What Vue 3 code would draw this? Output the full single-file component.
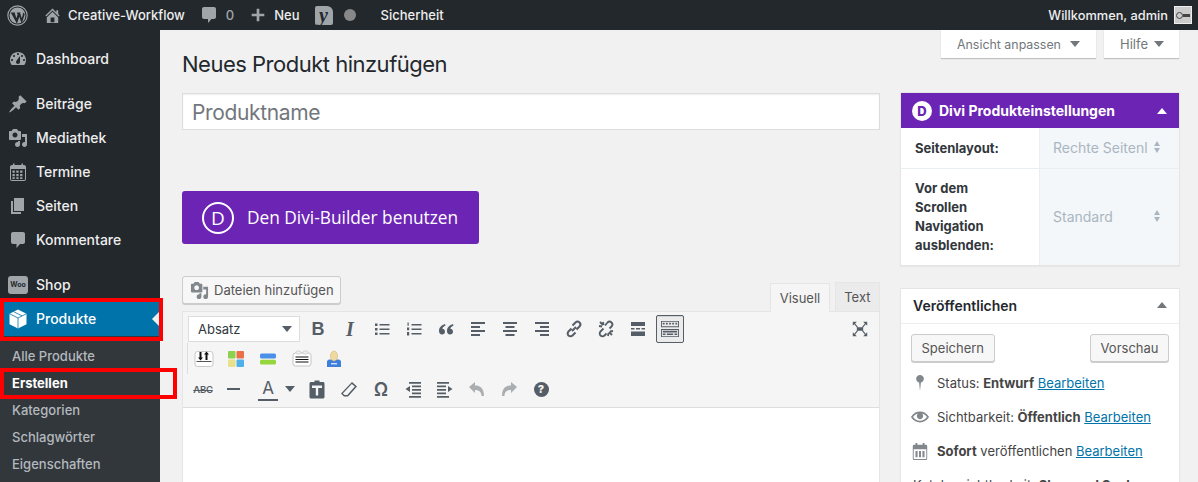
<script setup>
const P = {
  home: 'M16 8.500l1.530 1.530-1.060 1.060L10 4.620l-6.470 6.470-1.060-1.060L10 2.500l4 4v-2h2v4zm-6-2.460l6 5.990V18H4v-5.970zM12 17v-5H8v5h4z',
  comment: 'M5 2h10c1.100 0 2 .9 2 2v8c0 1.100-.9 2-2 2h-2.500L9 18v-4H5c-1.100 0-2-.9-2-2V4c0-1.100.9-2 2-2z',
  plus: 'M17 8.500v3h-5.500V17h-3v-5.500H3v-3h5.500V3h3v5.500z',
  dashboard: 'M3.760 16h12.480c1.100-1.370 1.760-3.110 1.760-5 0-4.420-3.580-8-8-8s-8 3.580-8 8c0 1.890.66 3.630 1.760 5zM10 4c.55 0 1 .45 1 1s-.45 1-1 1-1-.45-1-1 .45-1 1-1zM6 6c.55 0 1 .45 1 1s-.45 1-1 1-1-.45-1-1 .45-1 1-1zm8 0c.55 0 1 .45 1 1s-.45 1-1 1-1-.45-1-1 .45-1 1-1zm-5.370 5.550L12 7v6c0 1.100-.9 2-2 2s-2-.9-2-2c0-.57.24-1.080.63-1.450zM4 10c.55 0 1 .45 1 1s-.45 1-1 1-1-.45-1-1 .45-1 1-1zm12 0c.55 0 1 .45 1 1s-.45 1-1 1-1-.45-1-1 .45-1 1-1z',
  pin: 'M10.440 3.020l1.820-1.820 6.360 6.350-1.830 1.820c-1.050-.68-2.480-.57-3.410.36l-.75.75c-.92.93-1.040 2.350-.35 3.410l-1.830 1.820-2.410-2.410-2.800 2.790c-.42.42-3.380 2.710-3.800 2.290s1.860-3.390 2.280-3.810l2.790-2.790L4.100 9.360l1.830-1.820c1.050.69 2.480.57 3.400-.36l.75-.75c.93-.92 1.050-2.350.36-3.410z',
  media: 'M13 11V4c0-.55-.45-1-1-1h-1.670L9 1H5L3.670 3H2c-.55 0-1 .45-1 1v7c0 .55.45 1 1 1h10c.55 0 1-.45 1-1zM7 4.500c1.380 0 2.500 1.120 2.500 2.500S8.380 9.500 7 9.500 4.500 8.380 4.500 7 5.620 4.500 7 4.500zM14 6h5v10.500c0 1.380-1.120 2.500-2.500 2.500S14 17.880 14 16.500s1.120-2.500 2.500-2.500c.17 0 .34.02.5.05V9h-3V6zm-4 8.050V13h2v3.500c0 1.380-1.120 2.500-2.500 2.500S7 17.880 7 16.500 8.120 14 9.500 14c.17 0 .34.02.5.05z',
  calendar: 'M4 3h1V1.500h1.500V3h7V1.500H15V3h1c1.100 0 2 .9 2 2v12c0 1.100-.9 2-2 2H4c-1.100 0-2-.9-2-2V5c0-1.100.9-2 2-2zm-1 4v10c0 .55.45 1 1 1h12c.55 0 1-.45 1-1V7H3zm1.500 1.500h2.300v2.200H4.500zm3.800 0h2.300v2.200H8.300zm3.800 0h2.300v2.200h-2.300zM4.500 12h2.300v2.200H4.500zm3.800 0h2.300v2.200H8.300zm3.800 0h2.300v2.200h-2.300zM4.500 15.300h2.300v1.700H4.500zm3.800 0h2.300v1.700H8.300zm3.800 0h2.300v1.700h-2.300z',
  calendarCols: 'M3.500 3H5V1h2v2h6V1h2v2h1.500C17.300 3 18 3.700 18 4.500v14c0 .8-.7 1.500-1.500 1.500h-13C2.700 20 2 19.300 2 18.500v-14C2 3.700 2.700 3 3.500 3zM3 8v11h14V8zm2 2h2.300v7H5zm3.900 0h2.200v7H8.900zm3.800 0H15v7h-2.300z',
  page: 'M6 15V2h10v13H6zm-1 1h8v2H3V5h2v11z',
  bubble: 'M5 2h10c1.100 0 2 .9 2 2v8c0 1.100-.9 2-2 2h-3l-3.500 4v-4H5c-1.100 0-2-.9-2-2V4c0-1.100.9-2 2-2z',
  cube: 'M10 .5l8.500 4.200v10.600L10 19.500l-8.500-4.200V4.700z',
  eye: 'M19.700 9.400C17.700 6 14 3.900 10 3.900S2.300 6 .3 9.400L0 10l.3.600c2 3.400 5.700 5.500 9.700 5.500s7.700-2.100 9.700-5.500l.3-.6-.3-.6zM10 14.100c-3.100 0-6-1.600-7.700-4.100C3.600 8 5.700 6.600 8 6.100c-.9.6-1.500 1.700-1.500 2.900 0 1.900 1.600 3.500 3.500 3.500s3.500-1.600 3.500-3.500c0-1.200-.6-2.300-1.500-2.900 2.300.5 4.400 1.900 5.700 3.900-1.700 2.500-4.600 4.100-7.700 4.100z',
  statusPin: 'M10 1c2.400 0 4.300 1.900 4.300 4.300 0 2-1.400 3.700-3.300 4.200L10 19l-1-9.500C7.100 9 5.700 7.300 5.700 5.300 5.700 2.900 7.600 1 10 1z',
}
const menu = [
  { label: 'Dashboard', icon: P.dashboard, gap: true },
  { label: 'Beiträge', icon: P.pin },
  { label: 'Mediathek', icon: P.media },
  { label: 'Termine', icon: P.calendar },
  { label: 'Seiten', icon: P.page },
  { label: 'Kommentare', icon: P.bubble, gap: true },
  { label: 'Shop', woo: true },
]
const submenu = ['Alle Produkte', 'Erstellen', 'Kategorien', 'Schlagwörter', 'Eigenschaften']
</script>

<template>
  <div class="page">
    <header class="adminbar">
      <div class="bar-left">
        <svg class="wp" viewBox="0 0 20 20"><circle cx="10" cy="10" r="9.200" fill="none" stroke="#a0a5aa" stroke-width="1.100"/><circle cx="10" cy="10" r="7.600" fill="#a0a5aa"/><path d="M3.600 7.200h4.400l-.6.5 1.500 5 1.200-3.400-.7-2.100h3.700l-.6.5 1.500 5 1.100-3.300c.3-.9-.2-1.700.2-2.200l1.600 1.700-2.900 8.600-2.300-6.200-2.200 6.500z" fill="#23282d"/></svg>
        <svg class="ab-home" viewBox="0 0 20 20"><path :d="P.home"/></svg>
        <span class="ab-site">Creative-Workflow</span>
        <svg class="ab-comment" viewBox="0 0 20 20"><path :d="P.comment"/></svg>
        <span class="ab-count">0</span>
        <svg class="ab-plus" viewBox="0 0 20 20"><path :d="P.plus"/></svg>
        <span class="ab-new">Neu</span>
        <span class="ab-yoast"><span>y</span></span>
        <span class="ab-dot"></span>
        <span class="ab-sec">Sicherheit</span>
      </div>
      <div class="bar-right">
        <span>Willkommen, admin</span>
        <span class="avatar"><span class="avatar-ring"></span><span class="avatar-bar"></span></span>
      </div>
    </header>

    <div class="body">
      <nav class="sidebar">
        <ul class="menu">
          <li v-for="m in menu" :key="m.label" class="menu-item" :class="{ gap: m.gap }">
            <span v-if="m.woo" class="woo">Woo</span>
            <svg v-else class="menu-icon" viewBox="0 0 20 20"><path :d="m.icon"/></svg>
            <span>{{ m.label }}</span>
          </li>
          <li class="menu-item current">
            <svg class="menu-icon cube-icon" viewBox="0 0 20 20"><path :d="P.cube"/><path d="M1.500 4.700L10 9l8.500-4.300M10 9v10.500M5.500 2.600l8.500 4.300" stroke="#0073aa" stroke-width=".8" fill="none"/></svg>
            <span>Produkte</span>
            <i class="current-arrow"></i>
          </li>
        </ul>
        <ul class="submenu">
          <li v-for="s in submenu" :key="s" :class="{ active: s === 'Erstellen' }">{{ s }}</li>
        </ul>
        <div class="mark mark-main"></div>
        <div class="mark mark-sub"></div>
      </nav>

      <main class="content">
        <div class="screen-tabs">
          <span class="screen-tab">Ansicht anpassen<i class="tri"></i></span>
          <span class="screen-tab help">Hilfe<i class="tri"></i></span>
        </div>
        <div class="columns">
          <section class="main-col">
            <h1>Neues Produkt hinzufügen</h1>
            <div class="title-input">Produktname</div>
            <div class="divi-btn"><span class="divi-d">D</span><span>Den Divi-Builder benutzen</span></div>
            <div class="media-row">
              <span class="btn media-btn"><svg class="media-icon" viewBox="0 0 20 20"><path :d="P.media"/></svg>Dateien hinzufügen</span>
              <div class="tabs"><span class="tab on">Visuell</span><span class="tab">Text</span></div>
            </div>
            <div class="editor">
              <div class="toolbar">
                <div class="row row1">
                  <span class="fmt">Absatz<i class="tri dark"></i></span>
                  <span class="tb glyph b">B</span>
                  <span class="tb glyph i">I</span>
                  <span class="tb"><svg viewBox="0 0 20 20"><path d="M3 4.500h2.500V7H3zM3 9h2.500v2.500H3zM3 13.500h2.500V16H3zM7.500 5h10v1.400h-10zM7.500 9.500h10v1.400h-10zM7.500 14h10v1.400h-10z"/></svg></span>
                  <span class="tb"><svg viewBox="0 0 20 20"><path d="M3.500 3.500h1.200v3.300H3.500zM3 8.500h2.200v2.800H3zM3 13h2.200v3.500H3zM7.500 5h10v1.400h-10zM7.500 9.500h10v1.400h-10zM7.500 14h10v1.400h-10z"/></svg></span>
                  <span class="tb"><svg viewBox="0 0 20 20"><path d="M9 5C6 6 3 8 3 12c0 2 1.200 3.500 3 3.500s3-1.300 3-3-1.200-2.800-2.700-2.800c.3-1.200 1.500-2.500 3.200-3.200zM17 5c-3 1-6 3-6 7 0 2 1.200 3.500 3 3.500s3-1.300 3-3-1.200-2.800-2.700-2.800c.3-1.200 1.500-2.500 3.200-3.200z"/></svg></span>
                  <span class="tb"><svg viewBox="0 0 20 20"><path d="M3 3h14v2H3zM3 7h9v2H3zM3 11h14v2H3zM3 15h9v2H3z"/></svg></span>
                  <span class="tb"><svg viewBox="0 0 20 20"><path d="M3 3h14v2H3zM5.500 7h9v2h-9zM3 11h14v2H3zM5.500 15h9v2h-9z"/></svg></span>
                  <span class="tb"><svg viewBox="0 0 20 20"><path d="M3 3h14v2H3zM8 7h9v2H8zM3 11h14v2H3zM8 15h9v2H8z"/></svg></span>
                  <span class="tb"><svg viewBox="0 0 20 20"><path d="M8 12l4-4M7.500 9.500l-3 3a2.800 2.800 0 0 0 4 4l3-3M8.500 6.500l3-3a2.800 2.800 0 0 1 4 4l-3 3" fill="none" stroke="#555d66" stroke-width="2"/></svg></span>
                  <span class="tb"><svg viewBox="0 0 20 20"><path d="M7.500 9.500l-3 3a2.800 2.800 0 0 0 4 4l2-2M9 6.500l2.500-3a2.800 2.800 0 0 1 4 4l-2 2M4 3l3 3M3 7l3 .5M7 3l.5 3M16 16l-3-3M17 12l-3 .5M12 17l.5-3" fill="none" stroke="#555d66" stroke-width="1.800"/></svg></span>
                  <span class="tb"><svg viewBox="0 0 20 20"><path d="M3 3h14v4H3zM3 9h3.500v1.500H3zM8 9h4v1.500H8zM13.500 9H17v1.500h-3.500zM3 12.500h14V17H3z"/></svg></span>
                  <span class="tb kitchen"><svg viewBox="0 0 24 20"><path d="M2 1h20v7H2zm1 1v5h18V2zM4 3h2v2H4zm3.500 0h2v2h-2zm3.500 0h2v2h-2zm3.500 0h2v2h-2zm3.500 0h2v2h-2zM2 10h20v9H2zm1 1v7h18v-7zM4 12h16v1.800H4zM4 15h3v1.800H4zm4.500 0h7v1.800h-7zm8.500 0h3v1.800h-3z" fill-rule="evenodd"/></svg></span>
                  <span class="tb full"><svg viewBox="0 0 20 20"><path d="M2 2h4.500L2 6.500zM18 2v4.500L13.500 2zM2 18v-4.500L6.500 18zM18 18h-4.500l4.500-4.500zM6.500 8h7v4h-7z"/><path d="M3.500 3.500L7.500 8.500M16.500 3.500L12.500 8.500M3.500 16.500L7.500 11.500M16.500 16.500L12.500 11.500" stroke="#555d66" stroke-width="1.200"/></svg></span>
                </div>
                <div class="row row2">
                  <span class="tb color"><svg viewBox="0 0 20 20"><rect x="1" y="2.500" width="18" height="15" rx="2.500" fill="#fff" stroke="#c8c8c8"/><rect x="2.500" y="12" width="15" height="1" fill="#555"/><path d="M5.500 3v5.500H4l2.500 3 2.500-3H7.500V3zM13.500 11V5.500H15L12.500 2.500 10 5.500h1.500V11z" fill="#111"/></svg></span>
                  <span class="tb color"><svg viewBox="0 0 20 20"><rect x="2" y="2" width="7.500" height="7.500" rx="1" fill="#8ed14f"/><rect x="10.500" y="2" width="7.500" height="7.500" rx="1" fill="#ec7047"/><rect x="2" y="10.500" width="7.500" height="7.500" rx="1" fill="#e8e08a"/><rect x="10.500" y="10.500" width="7.500" height="7.500" rx="1" fill="#4fb0ea"/></svg></span>
                  <span class="tb color"><svg viewBox="0 0 20 20"><rect x="2" y="4.500" width="16" height="5" rx="1.500" fill="#4a8fe8"/><rect x="2" y="10.800" width="16" height="4.700" rx="1.500" fill="#94d63c"/></svg></span>
                  <span class="tb color shift"><svg viewBox="0 0 20 20"><rect x="1" y="4" width="18" height="13" rx="2.500" fill="#fff" stroke="#c4c4c4"/><rect x="4" y="2" width="5" height="3" rx="1.500" fill="#eee" stroke="#c4c4c4" stroke-width=".7"/><rect x="11" y="2" width="5" height="3" rx="1.500" fill="#eee" stroke="#c4c4c4" stroke-width=".7"/><path d="M3.500 7.500h13v1h-13zM3.500 10h13v1h-13zM3.500 12.500h13v1h-13z" fill="#111"/></svg></span>
                  <span class="tb color"><svg viewBox="0 0 20 20"><path d="M3 18v-5c0-1.500 1-2.500 2.500-2.500h9c1.500 0 2.500 1 2.500 2.500v5z" fill="#3f7fdc"/><rect x="7" y="14" width="6" height="1.400" fill="#cfe0f8"/><ellipse cx="10" cy="7" rx="3.600" ry="5" fill="#efd9a0" stroke="#c9b070" stroke-width=".5"/></svg></span>
                </div>
                <div class="row row3">
                  <span class="tb abc">ABC</span>
                  <span class="tb"><svg viewBox="0 0 20 20"><path d="M3 9h13v2H3z"/></svg></span>
                  <span class="tb color-a"><span>A</span></span>
                  <i class="tri dark a-caret"></i>
                  <span class="tb"><svg viewBox="0 0 20 20"><path d="M7.500 1.500h5V3h3.500c.8 0 1.500.7 1.500 1.500V18c0 .8-.7 1.500-1.500 1.500H4c-.8 0-1.500-.7-1.500-1.500V4.500C2.500 3.700 3.200 3 4 3h3.500zM5 6.500v2.500h3.800v7.500h2.400V9H15V6.500z" fill-rule="evenodd"/></svg></span>
                  <span class="tb"><svg viewBox="0 0 20 20"><path d="M13 3l5 4.500-9 10H5l-3-3zm-.2 2L3.800 14.400 5.700 16h2.600l7.600-8.400z" fill-rule="evenodd"/></svg></span>
                  <span class="tb glyph omega">Ω</span>
                  <span class="tb"><svg viewBox="0 0 20 20"><path d="M6 3h12v1.800H6zM9 6.500h9v1.800H9zM9 10h9v1.800H9zM9 13.500h9v1.800H9zM6 17h12v1.800H6zM7 7v6l-4.500-3z"/></svg></span>
                  <span class="tb"><svg viewBox="0 0 20 20"><path d="M2 3h12v1.800H2zM2 6.500h9v1.800H2zM2 10h9v1.800H2zM2 13.500h9v1.800H2zM2 17h12v1.800H2zM13 7v6l4.500-3z"/></svg></span>
                  <span class="tb muted"><svg viewBox="0 0 20 20"><path d="M2 8l6-5v3.500c5 0 9 2.500 9 10.500h-2.500c0-4-2.500-6-6.500-6V14z"/></svg></span>
                  <span class="tb muted"><svg viewBox="0 0 20 20"><path d="M18 8l-6-5v3.500c-5 0-9 2.500-9 10.500h2.500c0-4 2.500-6 6.500-6V14z"/></svg></span>
                  <span class="tb help-q"><span>?</span></span>
                </div>
              </div>
              <div class="editor-body"></div>
            </div>
          </section>

          <aside class="side-col">
            <section class="box divi-box">
              <header class="divi-head"><span class="divi-logo">D</span><span class="divi-title">Divi Produkteinstellungen</span><i class="tri up white"></i></header>
              <div class="set-row">
                <div class="set-label">Seitenlayout:</div>
                <div class="set-val"><span class="val-clip">Rechte Seitenl</span><span class="updown"></span></div>
              </div>
              <div class="set-row tall">
                <div class="set-label narrow">Vor dem Scrollen Navigation ausblenden:</div>
                <div class="set-val"><span class="val-clip">Standard</span><span class="updown"></span></div>
              </div>
            </section>
            <section class="box pub-box">
              <header class="pub-head"><span>Veröffentlichen</span><i class="tri up"></i></header>
              <div class="pub-actions"><span class="btn">Speichern</span><span class="btn">Vorschau</span></div>
              <div class="pub-line">
                <svg viewBox="0 0 20 20"><path :d="P.statusPin"/></svg>
                <span>Status: <b>Entwurf</b> <a>Bearbeiten</a></span>
              </div>
              <div class="pub-line">
                <svg viewBox="0 0 20 20"><path :d="P.eye"/></svg>
                <span>Sichtbarkeit: <b>Öffentlich</b> <a>Bearbeiten</a></span>
              </div>
              <div class="pub-line">
                <svg viewBox="0 0 20 20"><path :d="P.calendarCols"/></svg>
                <span><b>Sofort</b> veröffentlichen <a>Bearbeiten</a></span>
              </div>
              <div class="pub-line clipped"><span>Katalogsichtbarkeit: <b>Shop und Suche</b></span></div>
            </section>
          </aside>
        </div>
      </main>
    </div>
  </div>
</template>

<style scoped>
.page { width: 1198px; height: 482px; overflow: hidden; background: #f1f1f1; font-family: Inter, "Liberation Sans", sans-serif; font-size: 13px; color: #444; display: flex; flex-direction: column; }
ul { list-style: none; margin: 0; padding: 0; }
i { display: block; }

.adminbar { height: 30px; flex: none; background: #23282d; display: flex; justify-content: space-between; align-items: center; color: #eee; font-size: 13px; font-weight: 500; }
.adminbar svg { fill: #a0a5aa; display: block; }
.bar-left { display: flex; align-items: center; }
.bar-right { display: flex; align-items: center; gap: 6px; padding-right: 6px; font-size: 12.800px; }
.wp { width: 21px; height: 21px; margin-left: 7px; }
.ab-home { width: 19px; height: 19px; margin-left: 15px; }
.ab-site { margin-left: 6px; }
.ab-comment { width: 20px; height: 20px; margin-left: 14px; }
.ab-count { margin-left: 7px; color: #a0a5aa; }
.ab-plus { width: 18px; height: 18px; margin-left: 15px; }
.ab-new { margin-left: 7px; }
.ab-yoast { width: 18px; height: 19px; margin-left: 15px; background: #a0a5aa; border-radius: 2px 6px 2px 2px; color: #23282d; display: flex; align-items: center; justify-content: center; font: italic 700 20px/18px "Liberation Serif", serif; }
.ab-dot { width: 12px; height: 12px; border-radius: 50%; background: #888; margin-left: 11px; }
.ab-sec { margin-left: 25px; }
.avatar { width: 18px; height: 18px; box-sizing: border-box; border: 1px solid #eee; background: #ccc; display: flex; align-items: center; padding-left: 1px; }
.avatar-ring { width: 7px; height: 7px; border: 1.500px solid #444; border-radius: 50%; box-sizing: border-box; flex: none; }
.avatar-bar { width: 7px; height: 3px; background: #444; flex: none; }

.body { flex: 1; display: flex; min-height: 0; }
.sidebar { width: 160px; flex: none; background: #23282d; padding-top: 12px; position: relative; }
.menu-item { height: 34px; box-sizing: border-box; padding: 0 0 2px 8px; display: flex; align-items: center; color: #eee; font-size: 14px; font-weight: 500; position: relative; }
.menu-item.gap { margin-bottom: 11px; }
.menu-icon { width: 20px; height: 20px; fill: #a0a5aa; margin-right: 8px; flex: none; position: relative; top: 1px; }
.woo { width: 20px; height: 18px; margin-right: 8px; background: #a0a5aa; border-radius: 3px; color: #23282d; font-size: 7px; font-weight: 700; line-height: 18px; text-align: center; position: relative; top: 1px; }
.current { background: #0073aa; color: #fff; }
.current .cube-icon { fill: #fff; }
.current-arrow { position: absolute; right: 0; top: 9px; border: 8px solid transparent; border-right-color: #f1f1f1; border-left: 0; }
.submenu { background: #32373c; padding-top: 7px; height: 160px; }
.submenu li { height: 27px; line-height: 27px; padding-left: 12px; color: #b4b9be; font-size: 13px; font-weight: 500; }
.submenu li.active { color: #fff; font-weight: 700; }
.mark { position: absolute; box-sizing: border-box; border: 4px solid #f00; left: 0; }
.mark-main { top: 268px; width: 163px; height: 43px; }
.mark-sub { top: 338px; width: 177px; height: 31px; }

.content { flex: 1; min-width: 0; padding: 0 18px 0 22px; position: relative; }
.screen-tabs { position: absolute; top: 0; right: 19px; display: flex; gap: 8px; }
.screen-tab { height: 28px; width: 155px; box-sizing: border-box; background: #fff; box-shadow: 0 1px 1px rgba(0,0,0,.2); padding: 0 0 0 16px; display: flex; align-items: center; gap: 9px; color: #72777c; font-size: 12.400px; }
.screen-tab.help { width: 75px; padding-left: 16px; font-size: 13px; gap: 6px; }
.tri { width: 0; height: 0; border-left: 5px solid transparent; border-right: 5px solid transparent; border-top: 6px solid #72777c; }
.tri.dark { border-top-color: #555d66; }
.tri.up { border-top: 0; border-bottom: 6px solid #72777c; }
.tri.up.white { border-bottom-color: #fff; }

.columns { display: flex; gap: 20px; }
.main-col { width: 698px; flex: none; }
.side-col { width: 280px; flex: none; padding-top: 62px; }
h1 { margin: 0; padding-top: 21px; font-size: 22px; letter-spacing: -.5px; font-weight: 400; line-height: 26px; color: #23282d; height: 42px; }
.title-input { height: 37px; box-sizing: border-box; background: #fff; border: 1px solid #ddd; box-shadow: inset 0 1px 2px rgba(0,0,0,.07); padding-left: 9px; font-size: 21px; letter-spacing: -.35px; line-height: 37px; color: #72777c; }
.divi-btn { margin-top: 61px; width: 297px; height: 53px; background: #6c24b5; border-radius: 3px; color: #fff; font-family: "Open Sans", sans-serif; font-size: 17.300px; display: flex; align-items: center; padding-left: 20px; box-sizing: border-box; gap: 13px; }
.divi-d { border: 2px solid #fff; border-radius: 50%; display: flex; align-items: center; justify-content: center; font-size: 19px; width: 28px; height: 28px; }
.media-row { margin-top: 32px; height: 35px; display: flex; justify-content: space-between; }
.btn { display: inline-flex; align-items: center; box-sizing: border-box; height: 28px; padding: 0 10px; background: #f7f7f7; border: 1px solid #ccc; border-radius: 3px; box-shadow: 0 1px 0 #ccc; color: #555; font-size: 13px; }
.media-btn { width: 159px; padding: 0 0 0 7px; gap: 5px; }
.media-icon { width: 19px; height: 19px; fill: #82878c; flex: none; }
.tabs { display: flex; gap: 5px; align-items: flex-end; align-self: flex-end; }
.tab { height: 29px; box-sizing: border-box; padding: 0 8.500px; border: 1px solid #e5e5e5; border-bottom: 0; background: #ebebeb; color: #555; font-size: 13px; line-height: 28px; }
.tab.on { background: #f5f5f5; position: relative; top: 1px; }

.editor { border: 1px solid #e5e5e5; background: #fff; height: 200px; }
.toolbar { background: #f5f5f5; border-bottom: 1px solid #ddd; height: 96px; box-sizing: border-box; padding: 3px 0 0 5px; }
.row { display: flex; align-items: center; }
.row1 { height: 28px; }
.row2 { height: 31px; border-left: 1px solid #ddd; margin-left: -1px; }
.row3 { height: 30px; }
.fmt { width: 112px; height: 26px; box-sizing: border-box; background: #fff; border: 1px solid #ddd; display: flex; align-items: center; justify-content: space-between; padding: 0 7px 0 9px; color: #32373c; font-size: 13px; margin-right: 2px; }
.tb { width: 32px; height: 28px; flex: none; display: flex; align-items: center; justify-content: center; color: #555d66; }
.tb svg { width: 20px; height: 20px; fill: #555d66; display: block; }
.glyph { font-size: 18px; }
.b { font-family: "Liberation Sans", sans-serif; font-weight: 700; font-size: 18px; }
.i { font-family: "Liberation Serif", serif; font-style: italic; font-weight: 700; font-size: 20px; }
.kitchen { width: 28px; box-sizing: border-box; margin: 0 2px; border: 1px solid #555d66; border-radius: 2px; box-shadow: inset 0 1px 0 rgba(0,0,0,.1); background: #ebebeb; }
.kitchen svg { width: 22px; height: 18px; }
.full { margin-left: auto; margin-right: 3px; }
.full svg { width: 18px; height: 18px; }
.color.shift { margin-left: 2px; }
.abc { font-size: 9.500px; font-weight: 600; letter-spacing: -.2px; width: 30px; text-decoration: line-through; }
.row3 .tb:nth-child(2) { width: 28px; margin-left: 2px; }
.color-a { width: 40px; font-size: 17px; line-height: 20px; font-weight: 400; position: relative; }
.color-a span { border-bottom: 2px solid #555d66; padding: 0 4px; height: 21px; display: block; }
.a-caret { margin-left: -3px; margin-right: 6px; }
.omega { font-size: 18px; font-weight: 600; }
.muted svg { fill: #aaaeb1; }
.help-q span { width: 15px; height: 15px; border-radius: 50%; background: #555d66; color: #f5f5f5; font-size: 11px; font-weight: 800; line-height: 15px; text-align: center; display: block; }

.box { background: #fff; border: 1px solid #e5e5e5; box-shadow: 0 1px 1px rgba(0,0,0,.04); }
.divi-box { height: 174px; box-sizing: border-box; }
.divi-head { height: 35px; background: #6c24b5; color: #fff; display: flex; align-items: center; padding: 0 12px 0 11px; font-weight: 700; font-size: 14px; }
.divi-logo { width: 20px; height: 20px; background: #fff; color: #6c24b5; border-radius: 50%; font-size: 13px; font-weight: 800; text-align: center; line-height: 20px; margin-right: 7px; }
.divi-title { flex: 1; }
.set-row { display: flex; border-bottom: 1px solid #e9eef2; height: 41px; box-sizing: border-box; }
.set-row.tall { height: 96px; border-bottom: 0; }
.set-label { width: 138px; box-sizing: border-box; padding: 0 14px; font-weight: 700; color: #32373c; font-size: 13px; line-height: 19px; display: flex; align-items: center; }
.set-label.narrow { padding-right: 40px; }
.set-val { flex: 1; background: #f4f7f9; border-left: 1px solid #e9eef2; display: flex; align-items: center; justify-content: space-between; padding: 0 19px 2px 13px; color: #a9b6c2; font-size: 14px; }
.val-clip { white-space: nowrap; overflow: hidden; width: 96px; }
.updown { display: block; width: 0; height: 12px; border-left: 3.500px solid transparent; border-right: 3.500px solid transparent; position: relative; }
.updown::before, .updown::after { content: ""; position: absolute; left: -3.500px; border-left: 3.500px solid transparent; border-right: 3.500px solid transparent; }
.updown::before { top: 0; border-bottom: 5px solid #a9b6c2; }
.updown::after { bottom: 0; border-top: 5px solid #a9b6c2; }

.pub-box { margin-top: 22px; height: 260px; box-sizing: border-box; }
.pub-head { height: 35px; box-sizing: border-box; padding: 0 12px 2px; border-bottom: 1px solid #eee; display: flex; align-items: center; justify-content: space-between; font-size: 14px; font-weight: 600; color: #23282d; }
.pub-actions { display: flex; justify-content: space-between; padding: 10px 10px 4px; }
.pub-actions .btn { height: 28px; padding: 0 9.500px; }
.pub-line { display: flex; align-items: center; height: 34px; padding-left: 10px; color: #444; }
.pub-line svg { width: 18px; height: 18px; fill: #82878c; margin-right: 8px; flex: none; }
.pub-line a { color: #0073aa; text-decoration: underline; }
.pub-line b { font-weight: 700; }
.clipped { padding-left: 12px; }
</style>
